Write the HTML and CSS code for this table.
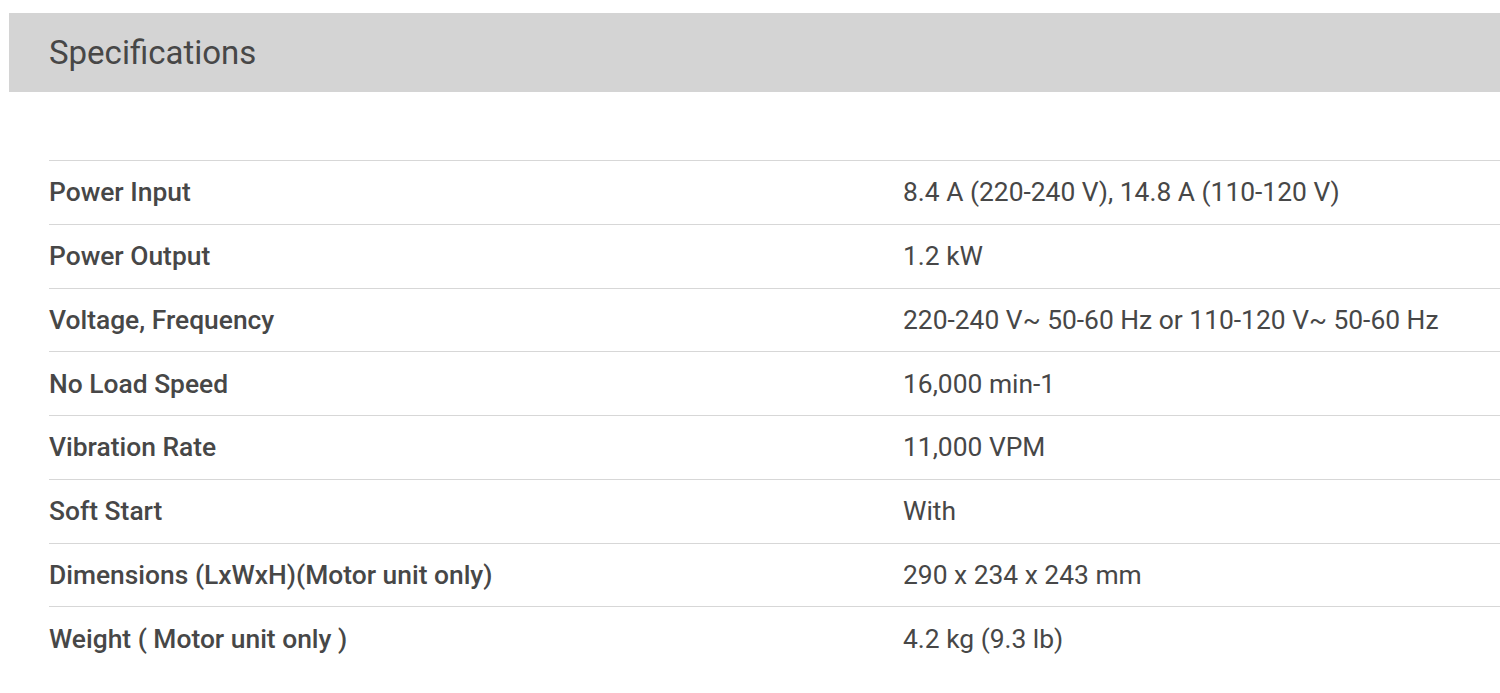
FILE: index.html
```html
<!DOCTYPE html>
<html lang="en">
<head>
<meta charset="utf-8">
<title>Specifications</title>
<link rel="stylesheet" href="styles.css">
</head>
<body>
<section class="specs">
  <h2 class="specs-title">Specifications</h2>
  <div class="specs-table">
    <div class="spec-row"><div class="spec-label">Power Input</div><div class="spec-value">8.4 A (220-240 V), 14.8 A (110-120 V)</div></div>
    <div class="spec-row"><div class="spec-label">Power Output</div><div class="spec-value">1.2 kW</div></div>
    <div class="spec-row"><div class="spec-label">Voltage, Frequency</div><div class="spec-value">220-240 V~ 50-60 Hz or 110-120 V~ 50-60 Hz</div></div>
    <div class="spec-row"><div class="spec-label">No Load Speed</div><div class="spec-value">16,000 min-1</div></div>
    <div class="spec-row"><div class="spec-label">Vibration Rate</div><div class="spec-value">11,000 VPM</div></div>
    <div class="spec-row"><div class="spec-label">Soft Start</div><div class="spec-value">With</div></div>
    <div class="spec-row"><div class="spec-label">Dimensions (LxWxH)(Motor unit only)</div><div class="spec-value">290 x 234 x 243 mm</div></div>
    <div class="spec-row"><div class="spec-label">Weight ( Motor unit only )</div><div class="spec-value">4.2 kg (9.3 lb)</div></div>
  </div>
</section>
</body>
</html>
```
FILE: styles.css
```css
html, body {
  margin: 0;
  padding: 0;
  background: #ffffff;
  overflow: hidden;
}
body {
  font-family: Roboto, "Liberation Sans", Arial, sans-serif;
  color: #474747;
}
.specs {
  padding: 13px 0 0 9px;
}
.specs-title {
  margin: 0;
  height: 79px;
  display: flex;
  align-items: center;
  padding-left: 40px;
  background: #d4d4d4;
  font-size: 33px;
  font-weight: 400;
  color: #474747;
}
.specs-table {
  margin: 68px 0 0 40px;
}
.spec-row {
  display: grid;
  grid-template-columns: 854px 1fr;
  align-items: center;
  height: 62.75px;
  border-top: 1px solid #d7d7d7;
  font-size: 26.4px;
}
.spec-label {
  font-weight: 500;
}
.spec-value {
  font-weight: 400;
}
```
